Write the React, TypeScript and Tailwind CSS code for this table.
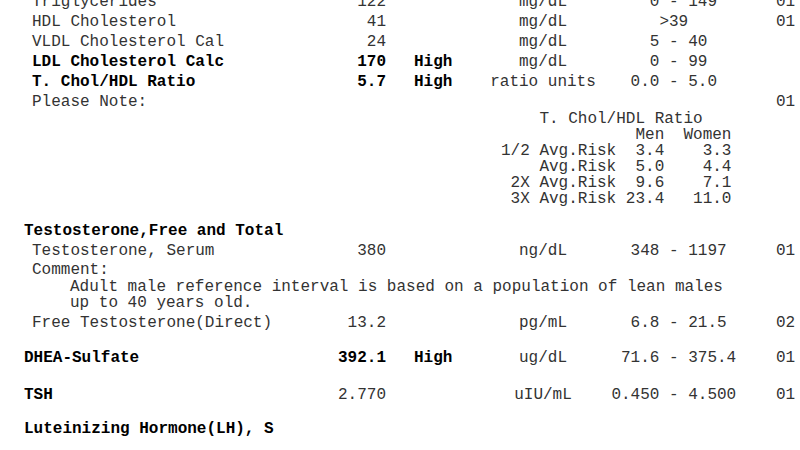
import type { ReactNode } from "react"

interface ResultRow {
  name: string
  value?: string
  flag?: string
  unit?: string
  lo?: string
  hi?: string
  code?: string
  boldName?: boolean
  boldValue?: boolean
  outdent?: boolean
}

const LIPIDS: ResultRow[] = [
  { name: "Triglycerides", value: "122", unit: "mg/dL", lo: "0", hi: "149", code: "01" },
  { name: "HDL Cholesterol", value: "41", unit: "mg/dL", hi: ">39", code: "01" },
  { name: "VLDL Cholesterol Cal", value: "24", unit: "mg/dL", lo: "5", hi: "40" },
  { name: "LDL Cholesterol Calc", value: "170", flag: "High", unit: "mg/dL", lo: "0", hi: "99", boldName: true, boldValue: true },
  { name: "T. Chol/HDL Ratio", value: "5.7", flag: "High", unit: "ratio units", lo: "0.0", hi: "5.0", boldName: true, boldValue: true },
  { name: "Please Note:", code: "01" },
]

// 注释表格：等宽字符对齐
const RATIO_NOTE = `    T. Chol/HDL Ratio
              Men  Women
1/2 Avg.Risk  3.4    3.3
    Avg.Risk  5.0    4.4
 2X Avg.Risk  9.6    7.1
 3X Avg.Risk 23.4   11.0`

function Row({ row, className = "" }: { row: ResultRow; className?: string }) {
  return (
    <div className={`grid h-5 grid-cols-[290px_96px_100px_114px_171px_1fr] items-center leading-5 ${className}`}>
      <span className={`whitespace-pre ${row.outdent ? "pl-[24px]" : "pl-[32px]"} ${row.boldName ? "font-bold text-black" : ""}`}>
        {row.name}
      </span>
      <span className={`text-right ${row.boldValue ? "font-bold text-black" : ""}`}>{row.value}</span>
      <span className="pl-[28px] font-bold text-black">{row.flag}</span>
      <span className="text-center whitespace-pre">{row.unit}</span>
      <span className="flex whitespace-pre">
        <span className="w-[59.4px] text-right">{row.lo}</span>
        {row.lo ? <span>{" - "}</span> : null}
        <span>{row.hi}</span>
      </span>
      <span className="pl-[5px]">{row.code}</span>
    </div>
  )
}

function Header({ children, className = "" }: { children: ReactNode; className?: string }) {
  return (
    <div className={`h-5 pl-[24px] font-bold leading-5 text-black ${className}`}>{children}</div>
  )
}

export default function App() {
  return (
    <div
      className="h-[450px] w-[800px] overflow-hidden bg-white text-[16px] text-[#333]"
      style={{ fontFamily: '"Liberation Mono", "Courier New", monospace' }}
    >
      <div className="-mt-[8px]">
        {LIPIDS.map((r) => (
          <Row key={r.name} row={r} />
        ))}

        <pre className="-mt-px pl-[501px] font-[inherit] leading-4">{RATIO_NOTE}</pre>

        <Header className="mt-[14px]">Testosterone,Free and Total</Header>
        <Row row={{ name: "Testosterone, Serum", value: "380", unit: "ng/dL", lo: "348", hi: "1197", code: "01" }} />
        <div className="h-[18px] pl-[32px] leading-[18px]">Comment:</div>
        <div className="pl-[70px] leading-4">
          <div>Adult male reference interval is based on a population of lean males</div>
          <div>up to 40 years old.</div>
        </div>
        <Row
          className="mt-[2px]"
          row={{ name: "Free Testosterone(Direct)", value: "13.2", unit: "pg/mL", lo: "6.8", hi: "21.5", code: "02" }}
        />

        <Row
          className="mt-[15px]"
          row={{ name: "DHEA-Sulfate", value: "392.1", flag: "High", unit: "ug/dL", lo: "71.6", hi: "375.4", code: "01", boldName: true, boldValue: true, outdent: true }}
        />
        <Row
          className="mt-[17px]"
          row={{ name: "TSH", value: "2.770", unit: "uIU/mL", lo: "0.450", hi: "4.500", code: "01", boldName: true, outdent: true }}
        />
        <Header className="mt-[14px]">Luteinizing Hormone(LH), S</Header>
      </div>
    </div>
  )
}
